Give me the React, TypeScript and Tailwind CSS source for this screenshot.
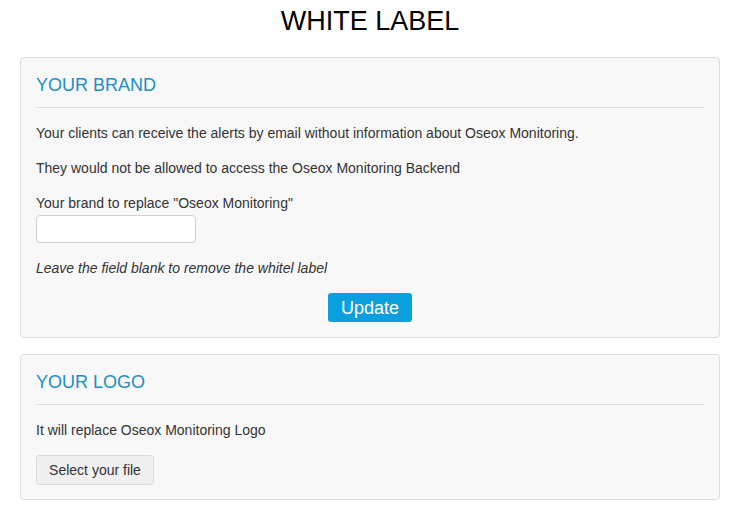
export default function App() {
  return (
    <div className="bg-white min-h-screen font-['Liberation_Sans',Arial,sans-serif] text-[#333]">
      <div className="pl-[20px] pr-[25px]">
        <h1 className="text-center text-[27px] leading-[40px] pt-[1px] text-black">WHITE LABEL</h1>

        <div className="mt-[16px] flex flex-col gap-[16px]">
          {/* Brand */}
          <div className="bg-[#f8f8f8] border border-[#dcdcdc] rounded-[4px] px-[15px] pt-[15px] pb-[15px]">
            <h2 className="mt-[2px] text-[18px] leading-[20px] text-[#1b90c4]">YOUR BRAND</h2>
            <div className="h-px bg-[#dcdcdc] mt-[12px]" />
            <div className="mt-[15px] text-[14px] leading-[20px]">
              <p>Your clients can receive the alerts by email without information about Oseox Monitoring.</p>
              <p className="mt-[15px]">They would not be allowed to access the Oseox Monitoring Backend</p>
              <p className="mt-[15px]">Your brand to replace "Oseox Monitoring"</p>
              <input
                type="text"
                className="mt-[2px] block w-[160px] h-[28px] bg-white border border-[#d0d0d0] rounded-[4px] px-2 outline-none"
              />
              <p className="mt-[15px] italic">Leave the field blank to remove the whitel label</p>
              <div className="mt-[15px] flex justify-center">
                <button className="h-[29px] w-[84px] bg-[#0ba0dd] text-white text-[18px] leading-[20px] rounded-[3px]">
                  Update
                </button>
              </div>
            </div>
          </div>

          {/* Logo */}
          <div className="bg-[#f8f8f8] border border-[#dcdcdc] rounded-[4px] px-[15px] pt-[15px] pb-[14px]">
            <h2 className="mt-[2px] text-[18px] leading-[20px] text-[#1b90c4]">YOUR LOGO</h2>
            <div className="h-px bg-[#dcdcdc] mt-[12px]" />
            <div className="mt-[15px] text-[14px] leading-[20px]">
              <p>It will replace Oseox Monitoring Logo</p>
              <button className="mt-[15px] h-[30px] w-[118px] bg-[#f0f0f0] border border-[#dcdcdc] rounded-[3px] text-[14px] text-[#333]">
                Select your file
              </button>
            </div>
          </div>
        </div>
      </div>
    </div>
  );
}
